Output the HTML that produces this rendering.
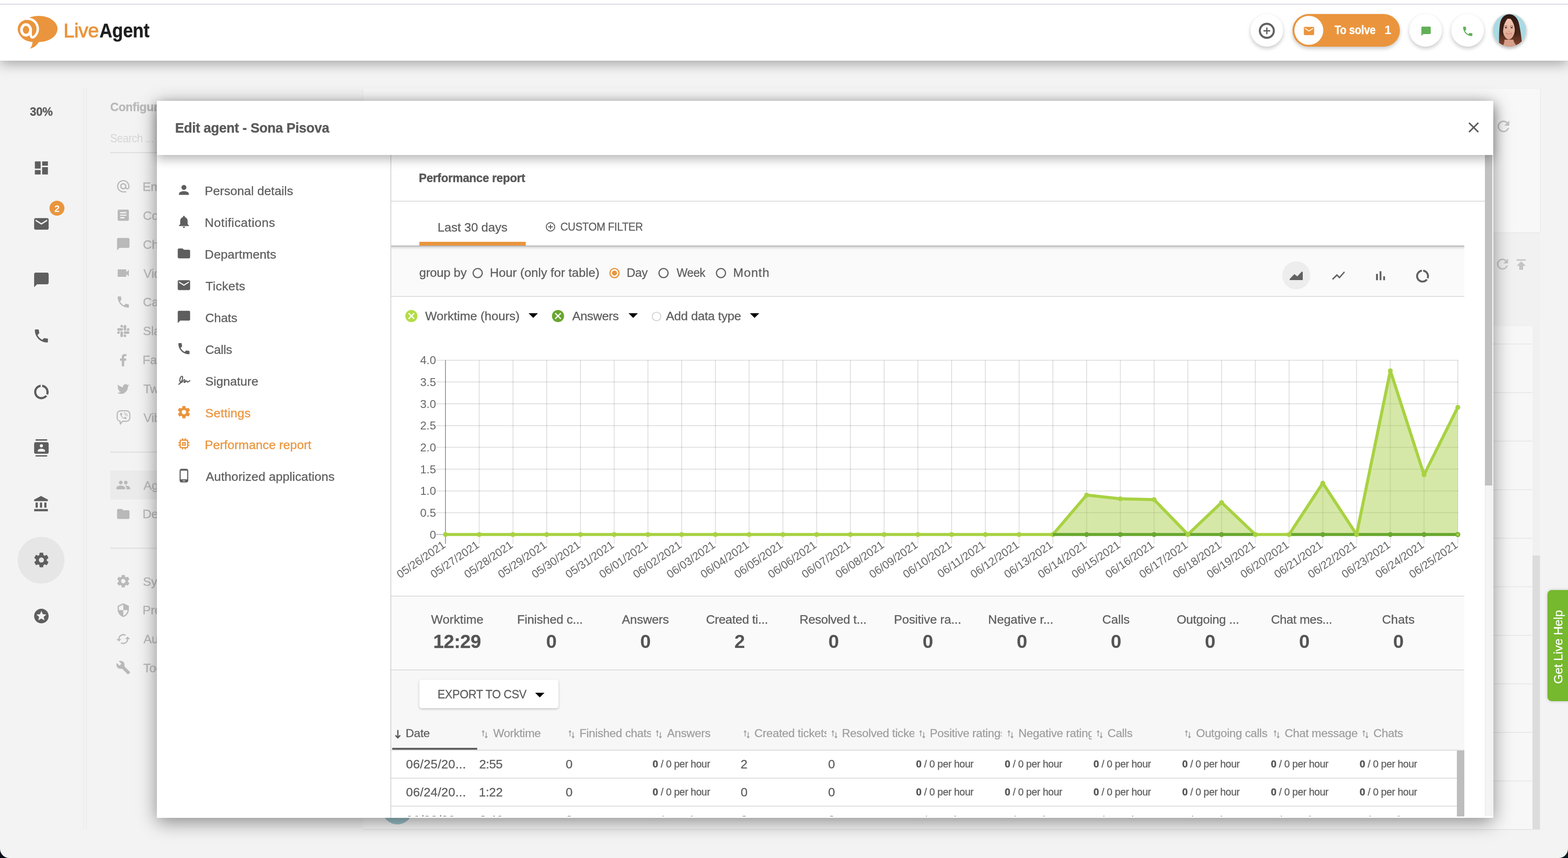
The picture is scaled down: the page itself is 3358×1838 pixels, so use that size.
<!DOCTYPE html>
<html lang="en"><head><meta charset="utf-8"><title>LiveAgent - Edit agent</title>
<style>
html,body{margin:0;padding:0}
body{width:3358px;height:1838px;position:relative;overflow:hidden;background:#f3f3f3;font-family:"Liberation Sans",Arial,sans-serif}
.t{position:absolute;white-space:nowrap;margin:0;padding:0}
#app{position:absolute;left:0;top:0;width:3358px;height:1838px;overflow:hidden;will-change:transform}
.b{position:absolute;display:block}
.c{position:absolute;overflow:hidden}
</style></head><body><div id="app">
<div class="b" style="left:778px;top:190px;width:2520px;height:308px;background:#f8f8f8;box-shadow:0 1px 3px rgba(0,0,0,.10)"></div>
<div class="b" style="left:778px;top:499px;width:2520px;height:200px;background:#f1f1f1"></div>
<div class="b" style="left:778px;top:699px;width:2504px;height:1078px;background:#f7f7f7"></div>
<div class="b" style="left:3282px;top:699px;width:16px;height:1078px;background:#f0f0f0"></div>
<div class="b" style="left:3282px;top:1190px;width:16px;height:587px;background:#dcdcdc"></div>
<div class="b" style="left:778px;top:1776px;width:2520px;height:2px;background:#e6e6e6"></div>
<div class="b" style="left:3198px;top:736px;width:84px;height:2px;background:#e9e9e9"></div>
<div class="b" style="left:3198px;top:840px;width:84px;height:2px;background:#e9e9e9"></div>
<div class="b" style="left:3198px;top:944px;width:84px;height:2px;background:#e9e9e9"></div>
<div class="b" style="left:3198px;top:1048px;width:84px;height:2px;background:#e9e9e9"></div>
<div class="b" style="left:3198px;top:1152px;width:84px;height:2px;background:#e9e9e9"></div>
<div class="b" style="left:3198px;top:1256.3px;width:84px;height:2px;background:#e9e9e9"></div>
<div class="b" style="left:3198px;top:1360px;width:84px;height:2px;background:#e9e9e9"></div>
<div class="b" style="left:3198px;top:1464.3px;width:84px;height:2px;background:#e9e9e9"></div>
<div class="b" style="left:3198px;top:1568px;width:84px;height:2px;background:#e9e9e9"></div>
<div class="b" style="left:3198px;top:1672.3px;width:84px;height:2px;background:#e9e9e9"></div>
<svg class="b" style="left:3200.9px;top:252.2px;" width="37.5" height="37.5" viewBox="0 0 24 24"><path fill="#c4c4c4" d="M17.65 6.35C16.2 4.9 14.21 4 12 4c-4.42 0-7.99 3.58-7.99 8s3.57 8 7.99 8c3.73 0 6.84-2.55 7.73-6h-2.08c-.82 2.33-3.04 4-5.65 4-3.31 0-6-2.69-6-6s2.69-6 6-6c1.66 0 3.14.69 4.22 1.78L13 11h7V4l-2.35 2.35z"/></svg>
<svg class="b" style="left:3200.1px;top:548.2px;" width="35.5" height="35.5" viewBox="0 0 24 24"><path fill="#c4c4c4" d="M17.65 6.35C16.2 4.9 14.21 4 12 4c-4.42 0-7.99 3.58-7.99 8s3.57 8 7.99 8c3.73 0 6.84-2.55 7.73-6h-2.08c-.82 2.33-3.04 4-5.65 4-3.31 0-6-2.69-6-6s2.69-6 6-6c1.66 0 3.14.69 4.22 1.78L13 11h7V4l-2.35 2.35z"/></svg>
<svg class="b" style="left:3240.6px;top:549.5px;" width="33.5" height="33.5" viewBox="0 0 24 24"><path fill="#c4c4c4" d="M5 4v2h14V4H5zm0 10h4v6h6v-6h4l-7-7-7 7z"/></svg>
<div class="b" style="left:818px;top:1700px;width:66px;height:66px;border-radius:50%;background:#9cc4cc"></div>
<div class="t" style="font-size:26.6px;line-height:26.6px;color:#b9b9b9;font-weight:700;-webkit-text-stroke:0.45px #b9b9b9;letter-spacing:-0.3px;left:235.8px;top:216.2px;transform:scaleX(0.9462);transform-origin:0 0;">Configuration</div>
<div class="t" style="font-size:25px;line-height:25px;color:#d8d8d8;-webkit-text-stroke:0.2px #d8d8d8;letter-spacing:-0.45px;left:235.5px;top:283.9px;transform:scaleX(0.9089);transform-origin:0 0;">Search ...</div>
<div class="b" style="left:236px;top:326px;width:200px;height:2px;background:#dedede"></div>
<div class="b" style="left:236px;top:1008px;width:200px;height:62px;background:#ebebeb"></div>
<svg class="b" style="left:247.5px;top:383.0px;" width="32" height="32" viewBox="0 0 24 24"><path fill="#b9b9b9" d="M12 2C6.48 2 2 6.48 2 12s4.48 10 10 10h5v-2h-5c-4.34 0-8-3.66-8-8s3.66-8 8-8 8 3.66 8 8v1.43c0 .79-.71 1.57-1.5 1.57s-1.5-.78-1.5-1.57V12c0-2.76-2.24-5-5-5s-5 2.24-5 5 2.24 5 5 5c1.38 0 2.64-.56 3.54-1.47.65.89 1.77 1.47 2.96 1.47 1.97 0 3.5-1.6 3.5-3.57V12c0-5.52-4.48-10-10-10zm0 13c-1.66 0-3-1.34-3-3s1.34-3 3-3 3 1.34 3 3-1.34 3-3 3z"/></svg>
<div class="t" style="font-size:26.6px;line-height:26.6px;color:#b9b9b9;-webkit-text-stroke:0.35px #b9b9b9;letter-spacing:-0.3px;left:305.2px;top:386.7px;">Email</div>
<svg class="b" style="left:247.5px;top:445.0px;" width="32" height="32" viewBox="0 0 24 24"><path fill="#b9b9b9" d="M19 3H5c-1.1 0-2 .9-2 2v14c0 1.1.9 2 2 2h14c1.1 0 2-.9 2-2V5c0-1.1-.9-2-2-2zm-5 14H7v-2h7v2zm3-4H7v-2h10v2zm0-4H7V7h10v2z"/></svg>
<div class="t" style="font-size:26.6px;line-height:26.6px;color:#b9b9b9;-webkit-text-stroke:0.35px #b9b9b9;letter-spacing:-0.3px;left:306.0px;top:448.7px;">Contact forms</div>
<svg class="b" style="left:247.5px;top:507.0px;" width="32" height="32" viewBox="0 0 24 24"><path fill="#b9b9b9" d="M20 2H4c-1.1 0-2 .9-2 2v18l4-4h14c1.1 0 2-.9 2-2V4c0-1.1-.9-2-2-2z"/></svg>
<div class="t" style="font-size:26.6px;line-height:26.6px;color:#b9b9b9;-webkit-text-stroke:0.35px #b9b9b9;letter-spacing:-0.3px;left:306.0px;top:510.7px;">Chat</div>
<svg class="b" style="left:247.5px;top:569.0px;" width="32" height="32" viewBox="0 0 24 24"><path fill="#b9b9b9" d="M17 10.5V7c0-.55-.45-1-1-1H4c-.55 0-1 .45-1 1v10c0 .55.45 1 1 1h12c.55 0 1-.45 1-1v-3.5l4 4v-11l-4 4z"/></svg>
<div class="t" style="font-size:26.6px;line-height:26.6px;color:#b9b9b9;-webkit-text-stroke:0.35px #b9b9b9;letter-spacing:-0.3px;left:307.2px;top:572.7px;">Video call</div>
<svg class="b" style="left:247.5px;top:630.5px;" width="32" height="32" viewBox="0 0 24 24"><path fill="#b9b9b9" d="M6.62 10.79c1.44 2.83 3.76 5.14 6.59 6.59l2.2-2.2c.27-.27.67-.36 1.02-.24 1.12.37 2.33.57 3.57.57.55 0 1 .45 1 1V20c0 .55-.45 1-1 1-9.39 0-17-7.61-17-17 0-.55.45-1 1-1h3.5c.55 0 1 .45 1 1 0 1.25.2 2.45.57 3.57.11.35.03.74-.25 1.02l-2.2 2.2z"/></svg>
<div class="t" style="font-size:26.6px;line-height:26.6px;color:#b9b9b9;-webkit-text-stroke:0.35px #b9b9b9;letter-spacing:-0.3px;left:306.0px;top:634.2px;">Call</div>
<svg class="b" style="left:250.5px;top:695.7px;" width="26.2" height="26.2" viewBox="0 0 24 24"><path fill="#b9b9b9" d="M5.042 15.165a2.528 2.528 0 0 1-2.52 2.523A2.528 2.528 0 0 1 0 15.165a2.527 2.527 0 0 1 2.522-2.52h2.52v2.52zM6.313 15.165a2.527 2.527 0 0 1 2.521-2.52 2.527 2.527 0 0 1 2.521 2.52v6.313A2.528 2.528 0 0 1 8.834 24a2.528 2.528 0 0 1-2.521-2.522v-6.313zM8.834 5.042a2.528 2.528 0 0 1-2.521-2.52A2.528 2.528 0 0 1 8.834 0a2.528 2.528 0 0 1 2.521 2.522v2.52H8.834zM8.834 6.313a2.528 2.528 0 0 1 2.521 2.521 2.528 2.528 0 0 1-2.521 2.521H2.522A2.528 2.528 0 0 1 0 8.834a2.528 2.528 0 0 1 2.522-2.521h6.312zM18.956 8.834a2.528 2.528 0 0 1 2.522-2.521A2.528 2.528 0 0 1 24 8.834a2.528 2.528 0 0 1-2.522 2.521h-2.522V8.834zM17.688 8.834a2.528 2.528 0 0 1-2.523 2.521 2.527 2.527 0 0 1-2.52-2.521V2.522A2.527 2.527 0 0 1 15.165 0a2.528 2.528 0 0 1 2.523 2.522v6.312zM15.165 18.956a2.528 2.528 0 0 1 2.523 2.522A2.528 2.528 0 0 1 15.165 24a2.527 2.527 0 0 1-2.52-2.522v-2.522h2.52zM15.165 17.688a2.527 2.527 0 0 1-2.52-2.523 2.526 2.526 0 0 1 2.52-2.52h6.313A2.527 2.527 0 0 1 24 15.165a2.528 2.528 0 0 1-2.522 2.523h-6.313z"/></svg>
<div class="t" style="font-size:26.6px;line-height:26.6px;color:#b9b9b9;-webkit-text-stroke:0.35px #b9b9b9;letter-spacing:-0.3px;left:306.1px;top:696.2px;">Slack</div>
<svg class="b" style="left:246.6px;top:753.8px;" width="33.5" height="33.5" viewBox="0 0 24 24"><path fill="#b9b9b9" d="M13.5 22v-8.5h2.9l.45-3.4H13.5V8c0-1 .3-1.65 1.7-1.65h1.8V3.3C16.7 3.25 15.6 3.15 14.4 3.15c-2.6 0-4.4 1.6-4.4 4.5v2.45H7.1v3.4H10V22z"/></svg>
<div class="t" style="font-size:26.6px;line-height:26.6px;color:#b9b9b9;-webkit-text-stroke:0.35px #b9b9b9;letter-spacing:-0.3px;left:305.2px;top:758.2px;">Facebook</div>
<svg class="b" style="left:249.1px;top:817.8px;" width="29.5" height="29.5" viewBox="0 0 24 24"><path fill="#b9b9b9" d="M22.46 6c-.77.35-1.6.58-2.46.69.88-.53 1.56-1.37 1.88-2.38-.83.5-1.75.85-2.72 1.05C18.37 4.5 17.26 4 16 4c-2.35 0-4.27 1.92-4.27 4.29 0 .34.04.67.11.98C8.28 9.09 5.11 7.38 3 4.79c-.37.63-.58 1.37-.58 2.15 0 1.49.75 2.81 1.91 3.56-.71 0-1.37-.2-1.95-.5v.03c0 2.08 1.48 3.82 3.44 4.21a4.22 4.22 0 0 1-1.93.07 4.28 4.28 0 0 0 4 2.98 8.521 8.521 0 0 1-5.33 1.84c-.34 0-.68-.02-1.02-.06C3.44 20.29 5.7 21 8.12 21 16 21 20.33 14.46 20.33 8.79c0-.19 0-.37-.01-.56.84-.6 1.56-1.36 2.14-2.23z"/></svg>
<div class="t" style="font-size:26.6px;line-height:26.6px;color:#b9b9b9;-webkit-text-stroke:0.35px #b9b9b9;letter-spacing:-0.3px;left:306.8px;top:819.7px;">Twitter</div>
<svg class="b" style="left:249px;top:878px" width="31" height="33" viewBox="0 0 31 33"><path d="M9 2 H22 A7 7 0 0 1 29 9 V17.5 A7 7 0 0 1 22 24.5 H13.5 L8.6 30.5 L8.2 24.3 A7 7 0 0 1 2 17.5 V9 A7 7 0 0 1 9 2 Z" fill="none" stroke="#b9b9b9" stroke-width="2.4" stroke-linejoin="round"/><g transform="translate(6.2,4.2) scale(0.74)"><path fill="#b9b9b9" d="M6.62 10.79c1.44 2.83 3.76 5.14 6.59 6.59l2.2-2.2c.27-.27.67-.36 1.02-.24 1.12.37 2.33.57 3.57.57.55 0 1 .45 1 1V20c0 .55-.45 1-1 1-9.39 0-17-7.61-17-17 0-.55.45-1 1-1h3.5c.55 0 1 .45 1 1 0 1.25.2 2.45.57 3.57.11.35.03.74-.25 1.02l-2.2 2.2z"/></g><path d="M17 6.2 A7.4 7.4 0 0 1 24 13 M17 9.2 A4.4 4.4 0 0 1 21 13" fill="none" stroke="#b9b9b9" stroke-width="1.3" stroke-linecap="round"/></svg>
<div class="t" style="font-size:26.6px;line-height:26.6px;color:#b9b9b9;-webkit-text-stroke:0.35px #b9b9b9;letter-spacing:-0.3px;left:307.2px;top:881.7px;">Viber</div>
<div class="b" style="left:236px;top:967px;width:200px;height:3px;background:#e4e4e4"></div>
<svg class="b" style="left:247.5px;top:1023.0px;" width="32" height="32" viewBox="0 0 24 24"><path fill="#b9b9b9" d="M16 11c1.66 0 2.99-1.34 2.99-3S17.66 5 16 5c-1.66 0-3 1.34-3 3s1.34 3 3 3zm-8 0c1.66 0 2.99-1.34 2.99-3S9.66 5 8 5C6.34 5 5 6.34 5 8s1.34 3 3 3zm0 2c-2.33 0-7 1.17-7 3.5V19h14v-2.5c0-2.33-4.67-3.5-7-3.5zm8 0c-.29 0-.62.02-.97.05 1.16.84 1.97 1.97 1.97 3.45V19h6v-2.5c0-2.33-4.67-3.5-7-3.5z"/></svg>
<div class="t" style="font-size:26.6px;line-height:26.6px;color:#b9b9b9;-webkit-text-stroke:0.35px #b9b9b9;letter-spacing:-0.3px;left:307.3px;top:1026.7px;">Agents</div>
<svg class="b" style="left:247.5px;top:1084.5px;" width="32" height="32" viewBox="0 0 24 24"><path fill="#b9b9b9" d="M10 4H4c-1.1 0-1.99.9-1.99 2L2 18c0 1.1.9 2 2 2h16c1.1 0 2-.9 2-2V8c0-1.1-.9-2-2-2h-8l-2-2z"/></svg>
<div class="t" style="font-size:26.6px;line-height:26.6px;color:#b9b9b9;-webkit-text-stroke:0.35px #b9b9b9;letter-spacing:-0.3px;left:305.2px;top:1088.2px;">Departments</div>
<div class="b" style="left:236px;top:1173px;width:200px;height:3px;background:#e4e4e4"></div>
<svg class="b" style="left:247.5px;top:1229.0px;" width="32" height="32" viewBox="0 0 24 24"><path fill="#b9b9b9" d="M19.43 12.98c.04-.32.07-.64.07-.98s-.03-.66-.07-.98l2.11-1.65c.19-.15.24-.42.12-.64l-2-3.46c-.12-.22-.39-.3-.61-.22l-2.49 1c-.52-.4-1.08-.73-1.69-.98l-.38-2.65C14.46 2.18 14.25 2 14 2h-4c-.25 0-.46.18-.49.42l-.38 2.65c-.61.25-1.17.59-1.69.98l-2.49-1c-.23-.09-.49 0-.61.22l-2 3.46c-.13.22-.07.49.12.64l2.11 1.65c-.04.32-.07.65-.07.98s.03.66.07.98l-2.11 1.65c-.19.15-.24.42-.12.64l2 3.46c.12.22.39.3.61.22l2.49-1c.52.4 1.08.73 1.69.98l.38 2.65c.03.24.24.42.49.42h4c.25 0 .46-.18.49-.42l.38-2.65c.61-.25 1.17-.59 1.69-.98l2.49 1c.23.09.49 0 .61-.22l2-3.46c.12-.22.07-.49-.12-.64l-2.11-1.65zM12 15.5c-1.93 0-3.5-1.57-3.5-3.5s1.57-3.5 3.5-3.5 3.5 1.57 3.5 3.5-1.57 3.5-3.5 3.5z"/></svg>
<div class="t" style="font-size:26.6px;line-height:26.6px;color:#b9b9b9;-webkit-text-stroke:0.35px #b9b9b9;letter-spacing:-0.3px;left:306.1px;top:1232.7px;">System</div>
<svg class="b" style="left:247.5px;top:1290.5px;" width="32" height="32" viewBox="0 0 24 24"><path fill="#b9b9b9" d="M12 1L3 5v6c0 5.55 3.84 10.74 9 12 5.16-1.26 9-6.45 9-12V5l-9-4zm0 10.99h7c-.53 4.12-3.28 7.79-7 8.94V12H5V6.3l7-3.11v8.8z"/></svg>
<div class="t" style="font-size:26.6px;line-height:26.6px;color:#b9b9b9;-webkit-text-stroke:0.35px #b9b9b9;letter-spacing:-0.3px;left:305.2px;top:1294.2px;">Protection</div>
<svg class="b" style="left:247.5px;top:1352.5px;" width="32" height="32" viewBox="0 0 24 24"><path fill="#b9b9b9" d="M19 8l-4 4h3c0 3.31-2.69 6-6 6-1.01 0-1.97-.25-2.8-.7l-1.46 1.46C8.97 19.54 10.43 20 12 20c4.42 0 8-3.58 8-8h3l-4-4zM6 12c0-3.31 2.69-6 6-6 1.01 0 1.97.25 2.8.7l1.46-1.46C15.03 4.46 13.57 4 12 4c-4.42 0-8 3.58-8 8H1l4 4 4-4H6z"/></svg>
<div class="t" style="font-size:26.6px;line-height:26.6px;color:#b9b9b9;-webkit-text-stroke:0.35px #b9b9b9;letter-spacing:-0.3px;left:307.3px;top:1356.2px;">Automation</div>
<svg class="b" style="left:247.5px;top:1414.0px;" width="32" height="32" viewBox="0 0 24 24"><path fill="#b9b9b9" d="M22.7 19l-9.1-9.1c.9-2.3.4-5-1.5-6.9-2-2-5-2.4-7.4-1.3L9 6 6 9 1.6 4.7C.4 7.1.9 10.1 2.9 12.1c1.9 1.9 4.6 2.4 6.9 1.5l9.1 9.1c.4.4 1 .4 1.4 0l2.3-2.3c.5-.4.5-1.1.1-1.4z"/></svg>
<div class="t" style="font-size:26.6px;line-height:26.6px;color:#b9b9b9;-webkit-text-stroke:0.35px #b9b9b9;letter-spacing:-0.3px;left:306.8px;top:1417.7px;">Tools</div>
<div class="b" style="left:178px;top:190px;width:2px;height:1586px;background:#ececec"></div>
<div class="b" style="left:184px;top:190px;width:2px;height:1586px;background:#ececec"></div>
<div class="t" style="font-size:26.6px;line-height:26.6px;color:#5c5c5c;font-weight:700;-webkit-text-stroke:0.45px #5c5c5c;letter-spacing:-0.3px;left:63.6px;top:226.2px;transform:scaleX(0.9299);transform-origin:0 0;">30%</div>
<div class="b" style="left:38px;top:1150px;width:100px;height:100px;border-radius:50%;background:#e6e6e6"></div>
<svg class="b" style="left:69.7px;top:341.2px;" width="37.3" height="37.3" viewBox="0 0 24 24"><path fill="#5e5e5e" d="M3 13h8V3H3v10zm0 8h8v-6H3v6zm10 0h8V11h-8v10zm0-18v6h8V3h-8z"/></svg>
<svg class="b" style="left:69.7px;top:461.2px;" width="37.3" height="37.3" viewBox="0 0 24 24"><path fill="#5e5e5e" d="M20 4H4c-1.1 0-1.99.9-1.99 2L2 18c0 1.1.9 2 2 2h16c1.1 0 2-.9 2-2V6c0-1.1-.9-2-2-2zm0 4l-8 5-8-5V6l8 5 8-5v2z"/></svg>
<svg class="b" style="left:69.7px;top:581.1px;" width="37.3" height="37.3" viewBox="0 0 24 24"><path fill="#5e5e5e" d="M20 2H4c-1.1 0-2 .9-2 2v18l4-4h14c1.1 0 2-.9 2-2V4c0-1.1-.9-2-2-2z"/></svg>
<svg class="b" style="left:69.7px;top:701.1px;" width="37.3" height="37.3" viewBox="0 0 24 24"><path fill="#5e5e5e" d="M6.62 10.79c1.44 2.83 3.76 5.14 6.59 6.59l2.2-2.2c.27-.27.67-.36 1.02-.24 1.12.37 2.33.57 3.57.57.55 0 1 .45 1 1V20c0 .55-.45 1-1 1-9.39 0-17-7.61-17-17 0-.55.45-1 1-1h3.5c.55 0 1 .45 1 1 0 1.25.2 2.45.57 3.57.11.35.03.74-.25 1.02l-2.2 2.2z"/></svg>
<svg class="b" style="left:69.7px;top:821.1px;" width="37.3" height="37.3" viewBox="0 0 24 24"><path fill="#5e5e5e" d="M13 2.05v3.03c3.39.49 6 3.39 6 6.92 0 .9-.18 1.75-.48 2.54l2.6 1.53c.56-1.24.88-2.62.88-4.07 0-5.18-3.95-9.45-9-9.95zM12 19c-3.87 0-7-3.13-7-7 0-3.53 2.61-6.43 6-6.92V2.05c-5.06.5-9 4.76-9 9.95 0 5.52 4.47 10 9.99 10 3.31 0 6.24-1.61 8.06-4.09l-2.6-1.53C16.17 17.98 14.21 19 12 19z"/></svg>
<svg class="b" style="left:69.7px;top:941.1px;" width="37.3" height="37.3" viewBox="0 0 24 24"><path fill="#5e5e5e" d="M20 0H4v2h16V0zM4 24h16v-2H4v2zM20 4H4c-1.1 0-2 .9-2 2v12c0 1.1.9 2 2 2h16c1.1 0 2-.9 2-2V6c0-1.1-.9-2-2-2zm-8 2.75c1.24 0 2.25 1.01 2.25 2.25s-1.01 2.25-2.25 2.25S9.75 10.24 9.75 9 10.76 6.75 12 6.75zM17 17H7v-1.5c0-1.67 3.33-2.5 5-2.5s5 .83 5 2.5V17z"/></svg>
<svg class="b" style="left:69.7px;top:1061.1px;" width="37.3" height="37.3" viewBox="0 0 24 24"><path fill="#5e5e5e" d="M4 10v7h3v-7H4zm6 0v7h3v-7h-3zM2 22h19v-3H2v3zm14-12v7h3v-7h-3zm-4.5-9L2 6v2h19V6l-9.5-5z"/></svg>
<svg class="b" style="left:69.7px;top:1181.1px;" width="37.3" height="37.3" viewBox="0 0 24 24"><path fill="#5e5e5e" d="M19.43 12.98c.04-.32.07-.64.07-.98s-.03-.66-.07-.98l2.11-1.65c.19-.15.24-.42.12-.64l-2-3.46c-.12-.22-.39-.3-.61-.22l-2.49 1c-.52-.4-1.08-.73-1.69-.98l-.38-2.65C14.46 2.18 14.25 2 14 2h-4c-.25 0-.46.18-.49.42l-.38 2.65c-.61.25-1.17.59-1.69.98l-2.49-1c-.23-.09-.49 0-.61.22l-2 3.46c-.13.22-.07.49.12.64l2.11 1.65c-.04.32-.07.65-.07.98s.03.66.07.98l-2.11 1.65c-.19.15-.24.42-.12.64l2 3.46c.12.22.39.3.61.22l2.49-1c.52.4 1.08.73 1.69.98l.38 2.65c.03.24.24.42.49.42h4c.25 0 .46-.18.49-.42l.38-2.65c.61-.25 1.17-.59 1.69-.98l2.49 1c.23.09.49 0 .61-.22l2-3.46c.12-.22.07-.49-.12-.64l-2.11-1.65zM12 15.5c-1.93 0-3.5-1.57-3.5-3.5s1.57-3.5 3.5-3.5 3.5 1.57 3.5 3.5-1.57 3.5-3.5 3.5z"/></svg>
<svg class="b" style="left:69.7px;top:1301.1px;" width="37.3" height="37.3" viewBox="0 0 24 24"><path fill="#5e5e5e" d="M11.99 2C6.47 2 2 6.48 2 12s4.47 10 9.99 10C17.52 22 22 17.52 22 12S17.52 2 11.99 2zm4.24 16L12 15.45 7.77 18l1.12-4.81-3.73-3.23 4.92-.42L12 5l1.92 4.53 4.92.42-3.73 3.23L16.23 18z"/></svg>
<div class="b" style="left:106px;top:430px;width:32px;height:32px;border-radius:50%;background:#ea953d"></div>
<div class="t" style="font-size:20px;line-height:20px;color:#fff;font-weight:700;left:116.5px;top:437.3px;">2</div>
<div class="b" style="left:0px;top:0px;width:3358px;height:130px;background:#fff;box-shadow:0 6px 26px rgba(0,0,0,.34)"></div>
<div class="b" style="left:0px;top:8px;width:3358px;height:2px;background:#d9d9e2"></div>
<svg class="b" style="left:30px;top:28px" width="100" height="84" viewBox="30 28 100 84" role="img" aria-label="LiveAgent logo mark"><title>@ LiveAgent</title>
<g fill="#ea953d"><ellipse cx="83" cy="62" rx="40.2" ry="28.1"/><circle cx="57.3" cy="62.2" r="19.4"/><ellipse cx="72" cy="64" rx="33" ry="26"/><path d="M69.5 87 Q70.5 96.5 64.3 104.2 Q75.5 102 83.5 90 Z"/></g>
<g fill="none" stroke="#fff"><ellipse cx="55.7" cy="64.1" rx="9.7" ry="11.4" stroke-width="5.8"/><path d="M54.6 40.5 A21.9 21.9 0 0 1 72.4 79.3 Q66.3 82.5 65.6 73 L65.6 60" stroke-width="5.2" stroke-linejoin="round"/></g></svg>
<div class="t" style="font-size:42.5px;line-height:42.5px;color:#ea953d;-webkit-text-stroke:1.1px #ea953d;letter-spacing:-0.45px;left:135.6px;top:45.1px;transform:scaleX(0.9912);transform-origin:0 0;">Live</div>
<div class="t" style="font-size:42.5px;line-height:42.5px;color:#1e1e1e;font-weight:700;-webkit-text-stroke:0.45px #1e1e1e;letter-spacing:-0.3px;left:213.0px;top:45.1px;transform:scaleX(0.8989);transform-origin:0 0;">Agent</div>
<div class="b" style="left:2678.0px;top:30.400000000000006px;width:70px;height:70px;border-radius:50%;background:#fff;box-shadow:0 4px 9px rgba(0,0,0,.22);"></div>
<svg class="b" style="left:2693px;top:45.6px" width="40" height="40" viewBox="0 0 40 40"><circle cx="20" cy="20" r="15" fill="none" stroke="#616161" stroke-width="4.3"/><path d="M12.8 20 H27.2 M20 12.8 V27.2" stroke="#616161" stroke-width="2.9" fill="none"/></svg>
<div class="b" style="left:2768px;top:30px;width:230px;height:70px;border-radius:35px;background:#ea953d;box-shadow:0 4px 9px rgba(0,0,0,.22);"></div>
<div class="b" style="left:2772.0px;top:34.0px;width:62px;height:62px;border-radius:50%;background:#fff;"></div>
<svg class="b" style="left:2789.7px;top:53.4px;" width="26.6" height="26.6" viewBox="0 0 24 24"><path fill="#ea953d" d="M20 4H4c-1.1 0-1.99.9-1.99 2L2 18c0 1.1.9 2 2 2h16c1.1 0 2-.9 2-2V6c0-1.1-.9-2-2-2zm0 4l-8 5-8-5V6l8 5 8-5v2z"/></svg>
<div class="t" style="font-size:26.6px;line-height:26.6px;color:#fff;font-weight:700;-webkit-text-stroke:0.45px #fff;letter-spacing:-0.3px;left:2858.1px;top:50.7px;transform:scaleX(0.8471);transform-origin:0 0;">To solve</div>
<div class="t" style="font-size:26.6px;line-height:26.6px;color:#fff;font-weight:700;left:2965.0px;top:50.7px;">1</div>
<div class="b" style="left:3018.0px;top:30.400000000000006px;width:70px;height:70px;border-radius:50%;background:#fff;box-shadow:0 4px 9px rgba(0,0,0,.22);"></div>
<svg class="b" style="left:3041.5px;top:54.6px;" width="24" height="24" viewBox="0 0 24 24"><path fill="#62b058" d="M20 2H4c-1.1 0-2 .9-2 2v18l4-4h14c1.1 0 2-.9 2-2V4c0-1.1-.9-2-2-2z"/></svg>
<div class="b" style="left:3108.0px;top:30.400000000000006px;width:70px;height:70px;border-radius:50%;background:#fff;box-shadow:0 4px 9px rgba(0,0,0,.22);"></div>
<svg class="b" style="left:3130.3px;top:53.5px;" width="26.5" height="26.5" viewBox="0 0 24 24"><path fill="#62b058" d="M6.62 10.79c1.44 2.83 3.76 5.14 6.59 6.59l2.2-2.2c.27-.27.67-.36 1.02-.24 1.12.37 2.33.57 3.57.57.55 0 1 .45 1 1V20c0 .55-.45 1-1 1-9.39 0-17-7.61-17-17 0-.55.45-1 1-1h3.5c.55 0 1 .45 1 1 0 1.25.2 2.45.57 3.57.11.35.03.74-.25 1.02l-2.2 2.2z"/></svg>
<svg class="b" style="left:3196.8px;top:29.3px;filter:drop-shadow(0 3px 3px rgba(0,0,0,.28))" width="72" height="72" viewBox="0 0 72 72" role="img" aria-label="Agent avatar">
<defs><clipPath id="av"><circle cx="36" cy="36" r="35"/></clipPath>
<linearGradient id="hr" x1="0" y1="0" x2="0" y2="1"><stop offset="0" stop-color="#2b1712"/><stop offset=".55" stop-color="#4a2519"/><stop offset="1" stop-color="#8a4a36"/></linearGradient>
<linearGradient id="sk" x1="0" y1="0" x2="0" y2="1"><stop offset="0" stop-color="#f0c6b2"/><stop offset="1" stop-color="#dfa590"/></linearGradient></defs>
<circle cx="36" cy="36" r="36" fill="#d9d9d9"/>
<g clip-path="url(#av)">
<rect width="72" height="72" fill="#a9dae3"/>
<path d="M35 1.5 C25 2 17.5 9 15.5 21 C13.5 33 13 52 13.5 74 L63 74 C62.5 60 60 40 56.5 24 C54 10 46 1.5 35 1.5 Z" fill="url(#hr)"/>
<path d="M25 56 L44 56 C45 63 50 68 56 74 L18 74 C23 68 25 63 25 56 Z" fill="#d79f8a"/>
<path d="M21 30 C21 17 27 11 34 11 C41.5 11 47.5 17 47.5 30 C47.5 44 41.5 55.5 34.2 55.5 C27 55.5 21 44 21 30 Z" fill="url(#sk)"/>
<path d="M34.5 7 C27 8 21.5 15 19.5 26 C18.5 33 19 43 20.5 50 C21.5 42 22 34 23.5 27 C25.5 19 30 12 34.5 7 Z" fill="#371d15"/>
<path d="M34.5 7 C41 9 47 15 49 26 C50.2 33 50.3 43 49 50 C48 42 47.5 34 46 27 C44 19 39.5 12 34.5 7 Z" fill="#371d15"/>
<ellipse cx="28" cy="30.2" rx="2.5" ry="1.3" fill="#3b2a28"/><ellipse cx="40.3" cy="30.2" rx="2.5" ry="1.3" fill="#3b2a28"/>
<path d="M24.8 27.3 Q28 25.6 31 27.2 M37.3 27.2 Q40.3 25.6 43.6 27.3" stroke="#5a3a30" stroke-width="0.9" fill="none"/>
<path d="M32.3 37.8 Q34.2 39.2 36.2 37.8" stroke="#c98d78" stroke-width="1" fill="none"/>
<path d="M28.2 42 Q34.2 48.8 40.4 42 Q34.2 44.2 28.2 42 Z" fill="#fff" stroke="#c66f68" stroke-width="1.1" stroke-linejoin="round"/>
</g></svg>
<div class="c" style="left:336px;top:216px;width:2862px;height:1536px;background:#fff;overflow:visible;box-shadow:0 9px 38px rgba(0,0,0,.44)"></div>
<svg class="b" style="left:378.1px;top:390.8px;" width="31.8" height="31.8" viewBox="0 0 24 24"><path fill="#5e5e5e" d="M12 12c2.21 0 4-1.79 4-4s-1.79-4-4-4-4 1.79-4 4 1.79 4 4 4zm0 2c-2.67 0-8 1.34-8 4v2h16v-2c0-2.66-5.33-4-8-4z"/></svg>
<div class="t" style="font-size:26.6px;line-height:26.6px;color:#5f5f5f;-webkit-text-stroke:0.35px #5f5f5f;left:438.6px;top:396.2px;">Personal details</div>
<svg class="b" style="left:378.1px;top:458.8px;" width="31.8" height="31.8" viewBox="0 0 24 24"><path fill="#5e5e5e" d="M12 22c1.1 0 2-.9 2-2h-4c0 1.1.89 2 2 2zm6-6v-5c0-3.07-1.64-5.64-4.5-6.32V4c0-.83-.67-1.5-1.5-1.5s-1.5.67-1.5 1.5v.68C7.63 5.36 6 7.92 6 11v5l-2 2v1h16v-1l-2-2z"/></svg>
<div class="t" style="font-size:26.6px;line-height:26.6px;color:#5f5f5f;-webkit-text-stroke:0.35px #5f5f5f;letter-spacing:0.47px;left:438.6px;top:464.2px;">Notifications</div>
<svg class="b" style="left:378.1px;top:526.8px;" width="31.8" height="31.8" viewBox="0 0 24 24"><path fill="#5e5e5e" d="M10 4H4c-1.1 0-1.99.9-1.99 2L2 18c0 1.1.9 2 2 2h16c1.1 0 2-.9 2-2V8c0-1.1-.9-2-2-2h-8l-2-2z"/></svg>
<div class="t" style="font-size:26.6px;line-height:26.6px;color:#5f5f5f;-webkit-text-stroke:0.35px #5f5f5f;letter-spacing:0.08px;left:438.6px;top:532.2px;">Departments</div>
<svg class="b" style="left:378.1px;top:594.8px;" width="31.8" height="31.8" viewBox="0 0 24 24"><path fill="#5e5e5e" d="M20 4H4c-1.1 0-1.99.9-1.99 2L2 18c0 1.1.9 2 2 2h16c1.1 0 2-.9 2-2V6c0-1.1-.9-2-2-2zm0 4l-8 5-8-5V6l8 5 8-5v2z"/></svg>
<div class="t" style="font-size:26.6px;line-height:26.6px;color:#5f5f5f;-webkit-text-stroke:0.35px #5f5f5f;letter-spacing:0.28px;left:440.2px;top:600.2px;">Tickets</div>
<svg class="b" style="left:378.1px;top:662.8px;" width="31.8" height="31.8" viewBox="0 0 24 24"><path fill="#5e5e5e" d="M20 2H4c-1.1 0-2 .9-2 2v18l4-4h14c1.1 0 2-.9 2-2V4c0-1.1-.9-2-2-2z"/></svg>
<div class="t" style="font-size:26.6px;line-height:26.6px;color:#5f5f5f;-webkit-text-stroke:0.35px #5f5f5f;letter-spacing:-0.12px;left:439.4px;top:668.2px;">Chats</div>
<svg class="b" style="left:378.1px;top:730.8px;" width="31.8" height="31.8" viewBox="0 0 24 24"><path fill="#5e5e5e" d="M6.62 10.79c1.44 2.83 3.76 5.14 6.59 6.59l2.2-2.2c.27-.27.67-.36 1.02-.24 1.12.37 2.33.57 3.57.57.55 0 1 .45 1 1V20c0 .55-.45 1-1 1-9.39 0-17-7.61-17-17 0-.55.45-1 1-1h3.5c.55 0 1 .45 1 1 0 1.25.2 2.45.57 3.57.11.35.03.74-.25 1.02l-2.2 2.2z"/></svg>
<div class="t" style="font-size:26.6px;line-height:26.6px;color:#5f5f5f;-webkit-text-stroke:0.35px #5f5f5f;letter-spacing:-0.28px;left:439.4px;top:736.2px;">Calls</div>
<svg class="b" style="left:377.5px;top:797.9px" width="33" height="33" viewBox="0 0 33 33"><path d="M5 25.2 C9.5 22.8 13.6 15 13.2 10.2 C12.8 6.2 8.6 8 7.4 14.2 C6.2 20.8 9.4 23.4 12.6 19.8 C14 18.2 15 15.6 16.8 15.4 C18.8 15.2 18.6 18 17 19.2 C15.4 20.4 16.2 21.8 18 21 C19.6 20.3 20.4 17.6 21.8 17.8 C23 18 22.2 20.3 23.6 20.5 C25 20.7 26.4 18.6 28.6 17.4" fill="none" stroke="#5e5e5e" stroke-width="2.3" stroke-linecap="round" stroke-linejoin="round"/></svg>
<div class="t" style="font-size:26.6px;line-height:26.6px;color:#5f5f5f;-webkit-text-stroke:0.35px #5f5f5f;letter-spacing:-0.03px;left:439.6px;top:804.2px;">Signature</div>
<svg class="b" style="left:378.1px;top:866.8px;" width="31.8" height="31.8" viewBox="0 0 24 24"><path fill="#ea953d" d="M19.43 12.98c.04-.32.07-.64.07-.98s-.03-.66-.07-.98l2.11-1.65c.19-.15.24-.42.12-.64l-2-3.46c-.12-.22-.39-.3-.61-.22l-2.49 1c-.52-.4-1.08-.73-1.69-.98l-.38-2.65C14.46 2.18 14.25 2 14 2h-4c-.25 0-.46.18-.49.42l-.38 2.65c-.61.25-1.17.59-1.69.98l-2.49-1c-.23-.09-.49 0-.61.22l-2 3.46c-.13.22-.07.49.12.64l2.11 1.65c-.04.32-.07.65-.07.98s.03.66.07.98l-2.11 1.65c-.19.15-.24.42-.12.64l2 3.46c.12.22.39.3.61.22l2.49-1c.52.4 1.08.73 1.69.98l.38 2.65c.03.24.24.42.49.42h4c.25 0 .46-.18.49-.42l.38-2.65c.61-.25 1.17-.59 1.69-.98l2.49 1c.23.09.49 0 .61-.22l2-3.46c.12-.22.07-.49-.12-.64l-2.11-1.65zM12 15.5c-1.93 0-3.5-1.57-3.5-3.5s1.57-3.5 3.5-3.5 3.5 1.57 3.5 3.5-1.57 3.5-3.5 3.5z"/></svg>
<div class="t" style="font-size:26.6px;line-height:26.6px;color:#ea953d;-webkit-text-stroke:0.35px #ea953d;letter-spacing:0.15px;left:439.6px;top:872.2px;">Settings</div>
<svg class="b" style="left:378.1px;top:934.8px;" width="31.8" height="31.8" viewBox="0 0 24 24"><path fill="#ea953d" d="M15 9H9v6h6V9zm-2 4h-2v-2h2v2zm8-2V9h-2V7c0-1.1-.9-2-2-2h-2V3h-2v2h-2V3H9v2H7c-1.1 0-2 .9-2 2v2H3v2h2v2H3v2h2v2c0 1.1.9 2 2 2h2v2h2v-2h2v2h2v-2h2c1.1 0 2-.9 2-2v-2h2v-2h-2v-2h2zm-4 6H7V7h10v10z"/></svg>
<div class="t" style="font-size:26.6px;line-height:26.6px;color:#ea953d;-webkit-text-stroke:0.35px #ea953d;letter-spacing:-0.04px;left:438.6px;top:940.2px;">Performance report</div>
<svg class="b" style="left:378.1px;top:1002.8px;" width="31.8" height="31.8" viewBox="0 0 24 24"><path fill="#5e5e5e" d="M16 1H8C6.34 1 5 2.34 5 4v16c0 1.66 1.34 3 3 3h8c1.66 0 3-1.34 3-3V4c0-1.66-1.34-3-3-3zm-2 20h-4v-1h4v1zm3.25-3H6.75V4h10.5v14z"/></svg>
<div class="t" style="font-size:26.6px;line-height:26.6px;color:#5f5f5f;-webkit-text-stroke:0.35px #5f5f5f;letter-spacing:0.03px;left:440.8px;top:1008.2px;">Authorized applications</div>
<div class="b" style="left:836px;top:332px;width:2px;height:1420px;background:#d6d6d6"></div>
<div class="t" style="font-size:26.6px;line-height:26.6px;color:#575757;font-weight:700;-webkit-text-stroke:0.45px #575757;letter-spacing:-0.3px;left:896.7px;top:367.8px;transform:scaleX(0.9426);transform-origin:0 0;">Performance report</div>
<div class="b" style="left:838px;top:430px;width:2342px;height:2px;background:#dedede"></div>
<div class="b" style="left:838px;top:526px;width:2298px;height:109px;background:#fafafa"></div>
<div class="b" style="left:838px;top:634px;width:2298px;height:2px;background:#dedede"></div>
<div class="b" style="left:838px;top:432px;width:2298px;height:94px;background:#fff"></div>
<div class="b" style="left:838px;top:526px;width:2298px;height:10px;background:linear-gradient(to bottom, rgba(0,0,0,.34), rgba(0,0,0,.13) 28%, rgba(0,0,0,.04) 65%, rgba(0,0,0,0))"></div>
<div class="t" style="font-size:26.6px;line-height:26.6px;color:#5f5f5f;-webkit-text-stroke:0.35px #5f5f5f;letter-spacing:-0.11px;left:937.1px;top:473.7px;">Last 30 days</div>
<div class="b" style="left:898px;top:518px;width:228px;height:8px;background:#ea953d"></div>
<svg class="b" style="left:1166.8px;top:473.8px;" width="24" height="24" viewBox="0 0 24 24"><path fill="#5e5e5e" d="M13 7h-2v4H7v2h4v4h2v-4h4v-2h-4V7zm-1-5C6.48 2 2 6.48 2 12s4.48 10 10 10 10-4.48 10-10S17.52 2 12 2zm0 18c-4.41 0-8-3.59-8-8s3.59-8 8-8 8 3.59 8 8-3.59 8-8 8z"/></svg>
<div class="t" style="font-size:24.2px;line-height:24.2px;color:#5f5f5f;-webkit-text-stroke:0.35px #5f5f5f;letter-spacing:-0.45px;left:1200.1px;top:474.0px;transform:scaleX(0.9457);transform-origin:0 0;">CUSTOM FILTER</div>
<div class="t" style="font-size:26.6px;line-height:26.6px;color:#5f5f5f;-webkit-text-stroke:0.35px #5f5f5f;letter-spacing:-0.25px;left:897.7px;top:571.4px;">group by</div>
<svg class="b" style="left:1011.25px;top:573px" width="24" height="24" viewBox="0 0 24 24"><circle cx="12" cy="12" r="9.7" fill="none" stroke="#666" stroke-width="2.6"/></svg>
<div class="t" style="font-size:26.6px;line-height:26.6px;color:#5f5f5f;-webkit-text-stroke:0.35px #5f5f5f;letter-spacing:-0.01px;left:1049.1px;top:571.4px;">Hour (only for table)</div>
<svg class="b" style="left:1304.25px;top:573px" width="24" height="24" viewBox="0 0 24 24"><circle cx="12" cy="12" r="9.7" fill="#fff" stroke="#ea953d" stroke-width="2.6"/><circle cx="12" cy="12" r="5.4" fill="#ea953d"/></svg>
<div class="t" style="font-size:26.6px;line-height:26.6px;color:#5f5f5f;-webkit-text-stroke:0.35px #5f5f5f;letter-spacing:-0.45px;left:1342.4px;top:571.4px;transform:scaleX(0.9717);transform-origin:0 0;">Day</div>
<svg class="b" style="left:1409.25px;top:573px" width="24" height="24" viewBox="0 0 24 24"><circle cx="12" cy="12" r="9.7" fill="none" stroke="#666" stroke-width="2.6"/></svg>
<div class="t" style="font-size:26.6px;line-height:26.6px;color:#5f5f5f;-webkit-text-stroke:0.35px #5f5f5f;letter-spacing:-0.45px;left:1448.7px;top:571.4px;transform:scaleX(0.9335);transform-origin:0 0;">Week</div>
<svg class="b" style="left:1531.75px;top:573px" width="24" height="24" viewBox="0 0 24 24"><circle cx="12" cy="12" r="9.7" fill="none" stroke="#666" stroke-width="2.6"/></svg>
<div class="t" style="font-size:26.6px;line-height:26.6px;color:#5f5f5f;-webkit-text-stroke:0.35px #5f5f5f;letter-spacing:0.91px;left:1569.9px;top:571.4px;">Month</div>
<div class="b" style="left:2746px;top:560px;width:60px;height:60px;border-radius:50%;background:#ededed"></div>
<svg class="b" style="left:2756px;top:570px" width="40" height="40" viewBox="0 0 40 40"><path fill="#616161" d="M6 30 V27.5 L16 17.2 L22.3 22 L32.2 11.6 L34 13 V30 Z"/></svg>
<svg class="b" style="left:2849.5px;top:574.0px;" width="33" height="33" viewBox="0 0 24 24"><path fill="#616161" d="M3.5 18.49l6-6.01 4 4L22 6.92l-1.41-1.41-7.09 7.97-4-4L2 16.99z"/></svg>
<svg class="b" style="left:2939.5px;top:574.0px;" width="33" height="33" viewBox="0 0 24 24"><path fill="#616161" d="M5 9.2h3V19H5zM10.6 5h2.8v14h-2.8zm5.6 8H19v6h-2.8z"/></svg>
<svg class="b" style="left:3029.5px;top:575.0px;" width="33" height="33" viewBox="0 0 24 24"><path fill="#616161" d="M13 2.05v3.03c3.39.49 6 3.39 6 6.92 0 .9-.18 1.75-.48 2.54l2.6 1.53c.56-1.24.88-2.62.88-4.07 0-5.18-3.95-9.45-9-9.95zM12 19c-3.87 0-7-3.13-7-7 0-3.53 2.61-6.43 6-6.92V2.05c-5.06.5-9 4.76-9 9.95 0 5.52 4.47 10 9.99 10 3.31 0 6.24-1.61 8.06-4.09l-2.6-1.53C16.17 17.98 14.21 19 12 19z"/></svg>
<svg class="b" style="left:867.75px;top:664px" width="26" height="26" viewBox="0 0 26 26"><circle cx="13" cy="13" r="13" fill="#b2dd48"/><path d="M7 7 L19 19 M19 7 L7 19" stroke="#fff" stroke-width="2.5" fill="none"/></svg>
<div class="t" style="font-size:26.6px;line-height:26.6px;color:#5f5f5f;-webkit-text-stroke:0.35px #5f5f5f;letter-spacing:-0.06px;left:910.4px;top:664.4px;">Worktime (hours)</div>
<svg class="b" style="left:1131.8px;top:671.25px" width="20" height="10" viewBox="0 0 20 10"><path d="M0 0 H20 L10.0 10 Z" fill="#000"/></svg>
<svg class="b" style="left:1182px;top:664px" width="26" height="26" viewBox="0 0 26 26"><circle cx="13" cy="13" r="13" fill="#68a72f"/><path d="M7 7 L19 19 M19 7 L7 19" stroke="#fff" stroke-width="2.5" fill="none"/></svg>
<div class="t" style="font-size:26.6px;line-height:26.6px;color:#5f5f5f;-webkit-text-stroke:0.35px #5f5f5f;letter-spacing:-0.35px;left:1225.5px;top:664.4px;">Answers</div>
<svg class="b" style="left:1346.25px;top:671.25px" width="20" height="10" viewBox="0 0 20 10"><path d="M0 0 H20 L10.0 10 Z" fill="#000"/></svg>
<svg class="b" style="left:1394.75px;top:666.5px" width="22" height="22" viewBox="0 0 22 22"><circle cx="11" cy="11" r="9.2" fill="#fff" stroke="#cfcfcf" stroke-width="1.8"/></svg>
<div class="t" style="font-size:26.6px;line-height:26.6px;color:#5f5f5f;-webkit-text-stroke:0.35px #5f5f5f;letter-spacing:-0.25px;left:1426.2px;top:664.4px;">Add data type</div>
<svg class="b" style="left:1606.25px;top:671.25px" width="20" height="10" viewBox="0 0 20 10"><path d="M0 0 H20 L10.0 10 Z" fill="#000"/></svg>
<svg class="b" style="left:838px;top:700px" width="2298" height="576" viewBox="838 700 2298 576" font-family="Liberation Sans, Arial, sans-serif">
<line x1="934" x2="3123.0" y1="771.70" y2="771.70" stroke="#000" stroke-opacity="0.12" stroke-width="2"/>
<line x1="934" x2="3123.0" y1="818.36" y2="818.36" stroke="#000" stroke-opacity="0.12" stroke-width="2"/>
<line x1="934" x2="3123.0" y1="865.03" y2="865.03" stroke="#000" stroke-opacity="0.12" stroke-width="2"/>
<line x1="934" x2="3123.0" y1="911.69" y2="911.69" stroke="#000" stroke-opacity="0.12" stroke-width="2"/>
<line x1="934" x2="3123.0" y1="958.35" y2="958.35" stroke="#000" stroke-opacity="0.12" stroke-width="2"/>
<line x1="934" x2="3123.0" y1="1005.01" y2="1005.01" stroke="#000" stroke-opacity="0.12" stroke-width="2"/>
<line x1="934" x2="3123.0" y1="1051.67" y2="1051.67" stroke="#000" stroke-opacity="0.12" stroke-width="2"/>
<line x1="934" x2="3123.0" y1="1098.34" y2="1098.34" stroke="#000" stroke-opacity="0.12" stroke-width="2"/>
<line x1="934" x2="3123.0" y1="1145.00" y2="1145.00" stroke="#000" stroke-opacity="0.25" stroke-width="2"/>
<line x1="954.00" x2="954.00" y1="771.70" y2="1165" stroke="#000" stroke-opacity="0.38" stroke-width="2"/>
<line x1="1026.27" x2="1026.27" y1="771.70" y2="1165" stroke="#000" stroke-opacity="0.12" stroke-width="2"/>
<line x1="1098.53" x2="1098.53" y1="771.70" y2="1165" stroke="#000" stroke-opacity="0.12" stroke-width="2"/>
<line x1="1170.80" x2="1170.80" y1="771.70" y2="1165" stroke="#000" stroke-opacity="0.12" stroke-width="2"/>
<line x1="1243.07" x2="1243.07" y1="771.70" y2="1165" stroke="#000" stroke-opacity="0.12" stroke-width="2"/>
<line x1="1315.33" x2="1315.33" y1="771.70" y2="1165" stroke="#000" stroke-opacity="0.12" stroke-width="2"/>
<line x1="1387.60" x2="1387.60" y1="771.70" y2="1165" stroke="#000" stroke-opacity="0.12" stroke-width="2"/>
<line x1="1459.87" x2="1459.87" y1="771.70" y2="1165" stroke="#000" stroke-opacity="0.12" stroke-width="2"/>
<line x1="1532.13" x2="1532.13" y1="771.70" y2="1165" stroke="#000" stroke-opacity="0.12" stroke-width="2"/>
<line x1="1604.40" x2="1604.40" y1="771.70" y2="1165" stroke="#000" stroke-opacity="0.12" stroke-width="2"/>
<line x1="1676.67" x2="1676.67" y1="771.70" y2="1165" stroke="#000" stroke-opacity="0.12" stroke-width="2"/>
<line x1="1748.93" x2="1748.93" y1="771.70" y2="1165" stroke="#000" stroke-opacity="0.12" stroke-width="2"/>
<line x1="1821.20" x2="1821.20" y1="771.70" y2="1165" stroke="#000" stroke-opacity="0.12" stroke-width="2"/>
<line x1="1893.47" x2="1893.47" y1="771.70" y2="1165" stroke="#000" stroke-opacity="0.12" stroke-width="2"/>
<line x1="1965.73" x2="1965.73" y1="771.70" y2="1165" stroke="#000" stroke-opacity="0.12" stroke-width="2"/>
<line x1="2038.00" x2="2038.00" y1="771.70" y2="1165" stroke="#000" stroke-opacity="0.12" stroke-width="2"/>
<line x1="2110.27" x2="2110.27" y1="771.70" y2="1165" stroke="#000" stroke-opacity="0.12" stroke-width="2"/>
<line x1="2182.53" x2="2182.53" y1="771.70" y2="1165" stroke="#000" stroke-opacity="0.12" stroke-width="2"/>
<line x1="2254.80" x2="2254.80" y1="771.70" y2="1165" stroke="#000" stroke-opacity="0.12" stroke-width="2"/>
<line x1="2327.07" x2="2327.07" y1="771.70" y2="1165" stroke="#000" stroke-opacity="0.12" stroke-width="2"/>
<line x1="2399.33" x2="2399.33" y1="771.70" y2="1165" stroke="#000" stroke-opacity="0.12" stroke-width="2"/>
<line x1="2471.60" x2="2471.60" y1="771.70" y2="1165" stroke="#000" stroke-opacity="0.12" stroke-width="2"/>
<line x1="2543.87" x2="2543.87" y1="771.70" y2="1165" stroke="#000" stroke-opacity="0.12" stroke-width="2"/>
<line x1="2616.13" x2="2616.13" y1="771.70" y2="1165" stroke="#000" stroke-opacity="0.12" stroke-width="2"/>
<line x1="2688.40" x2="2688.40" y1="771.70" y2="1165" stroke="#000" stroke-opacity="0.12" stroke-width="2"/>
<line x1="2760.67" x2="2760.67" y1="771.70" y2="1165" stroke="#000" stroke-opacity="0.12" stroke-width="2"/>
<line x1="2832.93" x2="2832.93" y1="771.70" y2="1165" stroke="#000" stroke-opacity="0.12" stroke-width="2"/>
<line x1="2905.20" x2="2905.20" y1="771.70" y2="1165" stroke="#000" stroke-opacity="0.12" stroke-width="2"/>
<line x1="2977.47" x2="2977.47" y1="771.70" y2="1165" stroke="#000" stroke-opacity="0.12" stroke-width="2"/>
<line x1="3049.73" x2="3049.73" y1="771.70" y2="1165" stroke="#000" stroke-opacity="0.12" stroke-width="2"/>
<line x1="3122.00" x2="3122.00" y1="771.70" y2="1165" stroke="#000" stroke-opacity="0.12" stroke-width="2"/>
<polygon points="954.0,1145.0 954.0,1145.0 1026.3,1145.0 1098.5,1145.0 1170.8,1145.0 1243.1,1145.0 1315.3,1145.0 1387.6,1145.0 1459.9,1145.0 1532.1,1145.0 1604.4,1145.0 1676.7,1145.0 1748.9,1145.0 1821.2,1145.0 1893.5,1145.0 1965.7,1145.0 2038.0,1145.0 2110.3,1145.0 2182.5,1145.0 2254.8,1145.0 2327.1,1060.5 2399.3,1068.5 2471.6,1070.3 2543.9,1145.0 2616.1,1076.4 2688.4,1145.0 2760.7,1145.0 2832.9,1034.9 2905.2,1145.0 2977.5,794.1 3049.7,1017.1 3122.0,872.5 3122.0,1145.0" fill="#a5cd3c" fill-opacity="0.45"/>
<polyline points="954.0,1145.0 1026.3,1145.0 1098.5,1145.0 1170.8,1145.0 1243.1,1145.0 1315.3,1145.0 1387.6,1145.0 1459.9,1145.0 1532.1,1145.0 1604.4,1145.0 1676.7,1145.0 1748.9,1145.0 1821.2,1145.0 1893.5,1145.0 1965.7,1145.0 2038.0,1145.0 2110.3,1145.0 2182.5,1145.0 2254.8,1145.0 2327.1,1060.5 2399.3,1068.5 2471.6,1070.3 2543.9,1145.0 2616.1,1076.4 2688.4,1145.0 2760.7,1145.0 2832.9,1034.9 2905.2,1145.0 2977.5,794.1 3049.7,1017.1 3122.0,872.5" fill="none" stroke="#a8d242" stroke-width="6.5" stroke-linejoin="round" stroke-linecap="round"/>
<circle cx="954.0" cy="1145.0" r="5.2" fill="#a8d242"/>
<circle cx="1026.3" cy="1145.0" r="5.2" fill="#a8d242"/>
<circle cx="1098.5" cy="1145.0" r="5.2" fill="#a8d242"/>
<circle cx="1170.8" cy="1145.0" r="5.2" fill="#a8d242"/>
<circle cx="1243.1" cy="1145.0" r="5.2" fill="#a8d242"/>
<circle cx="1315.3" cy="1145.0" r="5.2" fill="#a8d242"/>
<circle cx="1387.6" cy="1145.0" r="5.2" fill="#a8d242"/>
<circle cx="1459.9" cy="1145.0" r="5.2" fill="#a8d242"/>
<circle cx="1532.1" cy="1145.0" r="5.2" fill="#a8d242"/>
<circle cx="1604.4" cy="1145.0" r="5.2" fill="#a8d242"/>
<circle cx="1676.7" cy="1145.0" r="5.2" fill="#a8d242"/>
<circle cx="1748.9" cy="1145.0" r="5.2" fill="#a8d242"/>
<circle cx="1821.2" cy="1145.0" r="5.2" fill="#a8d242"/>
<circle cx="1893.5" cy="1145.0" r="5.2" fill="#a8d242"/>
<circle cx="1965.7" cy="1145.0" r="5.2" fill="#a8d242"/>
<circle cx="2038.0" cy="1145.0" r="5.2" fill="#a8d242"/>
<circle cx="2110.3" cy="1145.0" r="5.2" fill="#a8d242"/>
<circle cx="2182.5" cy="1145.0" r="5.2" fill="#a8d242"/>
<circle cx="2254.8" cy="1145.0" r="5.2" fill="#a8d242"/>
<circle cx="2327.1" cy="1060.5" r="5.2" fill="#a8d242"/>
<circle cx="2399.3" cy="1068.5" r="5.2" fill="#a8d242"/>
<circle cx="2471.6" cy="1070.3" r="5.2" fill="#a8d242"/>
<circle cx="2543.9" cy="1145.0" r="5.2" fill="#a8d242"/>
<circle cx="2616.1" cy="1076.4" r="5.2" fill="#a8d242"/>
<circle cx="2688.4" cy="1145.0" r="5.2" fill="#a8d242"/>
<circle cx="2760.7" cy="1145.0" r="5.2" fill="#a8d242"/>
<circle cx="2832.9" cy="1034.9" r="5.2" fill="#a8d242"/>
<circle cx="2905.2" cy="1145.0" r="5.2" fill="#a8d242"/>
<circle cx="2977.5" cy="794.1" r="5.2" fill="#a8d242"/>
<circle cx="3049.7" cy="1017.1" r="5.2" fill="#a8d242"/>
<circle cx="3122.0" cy="872.5" r="5.2" fill="#a8d242"/>
<line x1="2254.8" x2="2543.9" y1="1145.0" y2="1145.0" stroke="#69a82f" stroke-width="6.5"/>
<line x1="2543.9" x2="2688.4" y1="1145.0" y2="1145.0" stroke="#69a82f" stroke-width="6.5"/>
<line x1="2760.7" x2="2905.2" y1="1145.0" y2="1145.0" stroke="#69a82f" stroke-width="6.5"/>
<line x1="2905.2" x2="3122.0" y1="1145.0" y2="1145.0" stroke="#69a82f" stroke-width="6.5"/>
<circle cx="2327.1" cy="1145.0" r="5.2" fill="#69a82f"/>
<circle cx="2399.3" cy="1145.0" r="5.2" fill="#69a82f"/>
<circle cx="2471.6" cy="1145.0" r="5.2" fill="#69a82f"/>
<circle cx="2543.9" cy="1145.0" r="5.2" fill="#a8d242"/>
<circle cx="2616.1" cy="1145.0" r="5.2" fill="#69a82f"/>
<circle cx="2688.4" cy="1145.0" r="5.2" fill="#a8d242"/>
<circle cx="2760.7" cy="1145.0" r="5.2" fill="#a8d242"/>
<circle cx="2832.9" cy="1145.0" r="5.2" fill="#69a82f"/>
<circle cx="2905.2" cy="1145.0" r="5.2" fill="#a8d242"/>
<circle cx="2977.5" cy="1145.0" r="5.2" fill="#69a82f"/>
<circle cx="3049.7" cy="1145.0" r="5.2" fill="#69a82f"/>
<circle cx="3122.0" cy="1145.0" r="5.2" fill="#69a82f"/>
<circle cx="3122.0" cy="1145.0" r="4.2" fill="#a8d242" stroke="#69a82f" stroke-width="2"/>
<text x="933.8" y="780.3" text-anchor="end" font-size="24.5" fill="#666">4.0</text>
<text x="933.8" y="827.0" text-anchor="end" font-size="24.5" fill="#666">3.5</text>
<text x="933.8" y="873.6" text-anchor="end" font-size="24.5" fill="#666">3.0</text>
<text x="933.8" y="920.3" text-anchor="end" font-size="24.5" fill="#666">2.5</text>
<text x="933.8" y="967.0" text-anchor="end" font-size="24.5" fill="#666">2.0</text>
<text x="933.8" y="1013.6" text-anchor="end" font-size="24.5" fill="#666">1.5</text>
<text x="933.8" y="1060.3" text-anchor="end" font-size="24.5" fill="#666">1.0</text>
<text x="933.8" y="1106.9" text-anchor="end" font-size="24.5" fill="#666">0.5</text>
<text x="933.8" y="1153.6" text-anchor="end" font-size="24.5" fill="#666">0</text>
<text transform="translate(950.8,1164.2) rotate(-34.6)" text-anchor="end" font-size="24" fill="#666" dy="8.5">05/26/2021</text>
<text transform="translate(1023.1,1164.2) rotate(-34.6)" text-anchor="end" font-size="24" fill="#666" dy="8.5">05/27/2021</text>
<text transform="translate(1095.3,1164.2) rotate(-34.6)" text-anchor="end" font-size="24" fill="#666" dy="8.5">05/28/2021</text>
<text transform="translate(1167.6,1164.2) rotate(-34.6)" text-anchor="end" font-size="24" fill="#666" dy="8.5">05/29/2021</text>
<text transform="translate(1239.9,1164.2) rotate(-34.6)" text-anchor="end" font-size="24" fill="#666" dy="8.5">05/30/2021</text>
<text transform="translate(1312.1,1164.2) rotate(-34.6)" text-anchor="end" font-size="24" fill="#666" dy="8.5">05/31/2021</text>
<text transform="translate(1384.4,1164.2) rotate(-34.6)" text-anchor="end" font-size="24" fill="#666" dy="8.5">06/01/2021</text>
<text transform="translate(1456.7,1164.2) rotate(-34.6)" text-anchor="end" font-size="24" fill="#666" dy="8.5">06/02/2021</text>
<text transform="translate(1528.9,1164.2) rotate(-34.6)" text-anchor="end" font-size="24" fill="#666" dy="8.5">06/03/2021</text>
<text transform="translate(1601.2,1164.2) rotate(-34.6)" text-anchor="end" font-size="24" fill="#666" dy="8.5">06/04/2021</text>
<text transform="translate(1673.5,1164.2) rotate(-34.6)" text-anchor="end" font-size="24" fill="#666" dy="8.5">06/05/2021</text>
<text transform="translate(1745.7,1164.2) rotate(-34.6)" text-anchor="end" font-size="24" fill="#666" dy="8.5">06/06/2021</text>
<text transform="translate(1818.0,1164.2) rotate(-34.6)" text-anchor="end" font-size="24" fill="#666" dy="8.5">06/07/2021</text>
<text transform="translate(1890.3,1164.2) rotate(-34.6)" text-anchor="end" font-size="24" fill="#666" dy="8.5">06/08/2021</text>
<text transform="translate(1962.5,1164.2) rotate(-34.6)" text-anchor="end" font-size="24" fill="#666" dy="8.5">06/09/2021</text>
<text transform="translate(2034.8,1164.2) rotate(-34.6)" text-anchor="end" font-size="24" fill="#666" dy="8.5">06/10/2021</text>
<text transform="translate(2107.1,1164.2) rotate(-34.6)" text-anchor="end" font-size="24" fill="#666" dy="8.5">06/11/2021</text>
<text transform="translate(2179.3,1164.2) rotate(-34.6)" text-anchor="end" font-size="24" fill="#666" dy="8.5">06/12/2021</text>
<text transform="translate(2251.6,1164.2) rotate(-34.6)" text-anchor="end" font-size="24" fill="#666" dy="8.5">06/13/2021</text>
<text transform="translate(2323.9,1164.2) rotate(-34.6)" text-anchor="end" font-size="24" fill="#666" dy="8.5">06/14/2021</text>
<text transform="translate(2396.1,1164.2) rotate(-34.6)" text-anchor="end" font-size="24" fill="#666" dy="8.5">06/15/2021</text>
<text transform="translate(2468.4,1164.2) rotate(-34.6)" text-anchor="end" font-size="24" fill="#666" dy="8.5">06/16/2021</text>
<text transform="translate(2540.7,1164.2) rotate(-34.6)" text-anchor="end" font-size="24" fill="#666" dy="8.5">06/17/2021</text>
<text transform="translate(2612.9,1164.2) rotate(-34.6)" text-anchor="end" font-size="24" fill="#666" dy="8.5">06/18/2021</text>
<text transform="translate(2685.2,1164.2) rotate(-34.6)" text-anchor="end" font-size="24" fill="#666" dy="8.5">06/19/2021</text>
<text transform="translate(2757.5,1164.2) rotate(-34.6)" text-anchor="end" font-size="24" fill="#666" dy="8.5">06/20/2021</text>
<text transform="translate(2829.7,1164.2) rotate(-34.6)" text-anchor="end" font-size="24" fill="#666" dy="8.5">06/21/2021</text>
<text transform="translate(2902.0,1164.2) rotate(-34.6)" text-anchor="end" font-size="24" fill="#666" dy="8.5">06/22/2021</text>
<text transform="translate(2974.3,1164.2) rotate(-34.6)" text-anchor="end" font-size="24" fill="#666" dy="8.5">06/23/2021</text>
<text transform="translate(3046.5,1164.2) rotate(-34.6)" text-anchor="end" font-size="24" fill="#666" dy="8.5">06/24/2021</text>
<text transform="translate(3118.8,1164.2) rotate(-34.6)" text-anchor="end" font-size="24" fill="#666" dy="8.5">06/25/2021</text>
</svg>
<div class="b" style="left:838px;top:1276px;width:2298px;height:2px;background:#dedede"></div>
<div class="b" style="left:838px;top:1278px;width:2298px;height:156px;background:#fafafa"></div>
<div class="b" style="left:838px;top:1434px;width:2298px;height:2px;background:#dedede"></div>
<div class="t" style="font-size:26.6px;line-height:26.6px;color:#5f5f5f;-webkit-text-stroke:0.35px #5f5f5f;letter-spacing:0.03px;left:923.3px;top:1313.8px;">Worktime</div>
<div class="t" style="font-size:41px;line-height:41px;color:#555;font-weight:700;-webkit-text-stroke:0.45px #555;letter-spacing:-0.3px;left:927.6px;top:1353.5px;transform:scaleX(0.9874);transform-origin:0 0;">12:29</div>
<div class="t" style="font-size:26.6px;line-height:26.6px;color:#5f5f5f;-webkit-text-stroke:0.35px #5f5f5f;letter-spacing:-0.23px;left:1107.6px;top:1313.8px;">Finished c...</div>
<div class="t" style="font-size:41px;line-height:41px;color:#555;font-weight:700;left:1169.5px;top:1353.5px;">0</div>
<div class="t" style="font-size:26.6px;line-height:26.6px;color:#5f5f5f;-webkit-text-stroke:0.35px #5f5f5f;letter-spacing:-0.2px;left:1331.8px;top:1313.8px;">Answers</div>
<div class="t" style="font-size:41px;line-height:41px;color:#555;font-weight:700;left:1371.0px;top:1353.5px;">0</div>
<div class="t" style="font-size:26.6px;line-height:26.6px;color:#5f5f5f;-webkit-text-stroke:0.35px #5f5f5f;letter-spacing:-0.38px;left:1511.9px;top:1313.8px;">Created ti...</div>
<div class="t" style="font-size:41px;line-height:41px;color:#555;font-weight:700;left:1572.7px;top:1353.5px;">2</div>
<div class="t" style="font-size:26.6px;line-height:26.6px;color:#5f5f5f;-webkit-text-stroke:0.35px #5f5f5f;letter-spacing:-0.35px;left:1712.3px;top:1313.8px;">Resolved t...</div>
<div class="t" style="font-size:41px;line-height:41px;color:#555;font-weight:700;left:1774.1px;top:1353.5px;">0</div>
<div class="t" style="font-size:26.6px;line-height:26.6px;color:#5f5f5f;-webkit-text-stroke:0.35px #5f5f5f;letter-spacing:-0.16px;left:1914.5px;top:1313.8px;">Positive ra...</div>
<div class="t" style="font-size:41px;line-height:41px;color:#555;font-weight:700;left:1975.7px;top:1353.5px;">0</div>
<div class="t" style="font-size:26.6px;line-height:26.6px;color:#5f5f5f;-webkit-text-stroke:0.35px #5f5f5f;letter-spacing:-0.17px;left:2116.1px;top:1313.8px;">Negative r...</div>
<div class="t" style="font-size:41px;line-height:41px;color:#555;font-weight:700;left:2177.2px;top:1353.5px;">0</div>
<div class="t" style="font-size:26.6px;line-height:26.6px;color:#5f5f5f;-webkit-text-stroke:0.35px #5f5f5f;letter-spacing:-0.06px;left:2360.5px;top:1313.8px;">Calls</div>
<div class="t" style="font-size:41px;line-height:41px;color:#555;font-weight:700;left:2378.8px;top:1353.5px;">0</div>
<div class="t" style="font-size:26.6px;line-height:26.6px;color:#5f5f5f;-webkit-text-stroke:0.35px #5f5f5f;letter-spacing:-0.32px;left:2519.9px;top:1313.8px;">Outgoing ...</div>
<div class="t" style="font-size:41px;line-height:41px;color:#555;font-weight:700;left:2580.3px;top:1353.5px;">0</div>
<div class="t" style="font-size:26.6px;line-height:26.6px;color:#5f5f5f;-webkit-text-stroke:0.35px #5f5f5f;letter-spacing:-0.45px;left:2721.7px;top:1313.8px;transform:scaleX(0.9979);transform-origin:0 0;">Chat mes...</div>
<div class="t" style="font-size:41px;line-height:41px;color:#555;font-weight:700;left:2781.9px;top:1353.5px;">0</div>
<div class="t" style="font-size:26.6px;line-height:26.6px;color:#5f5f5f;-webkit-text-stroke:0.35px #5f5f5f;letter-spacing:0.07px;left:2959.8px;top:1313.8px;">Chats</div>
<div class="t" style="font-size:41px;line-height:41px;color:#555;font-weight:700;left:2983.4px;top:1353.5px;">0</div>
<div class="b" style="left:838px;top:1436px;width:2298px;height:171px;background:#f7f7f7"></div>
<div class="b" style="left:898px;top:1456px;width:298px;height:61px;border-radius:5px;background:#fff;box-shadow:0 2px 5px rgba(0,0,0,.22)"></div>
<div class="t" style="font-size:26.6px;line-height:26.6px;color:#5f5f5f;-webkit-text-stroke:0.35px #5f5f5f;letter-spacing:-0.45px;left:937.3px;top:1473.9px;transform:scaleX(0.9154);transform-origin:0 0;">EXPORT TO CSV</div>
<svg class="b" style="left:1146.25px;top:1484px" width="20" height="10" viewBox="0 0 20 10"><path d="M0 0 H20 L10.0 10 Z" fill="#000"/></svg>
<svg class="b" style="left:845px;top:1563px" width="14" height="20" viewBox="0 0 14 20"><path d="M7 0.8 V17 M1.9 12.3 L7 17.6 L12.1 12.3" fill="none" stroke="#555" stroke-width="2.7"/></svg>
<div class="t" style="font-size:24.8px;line-height:24.8px;color:#5f5f5f;-webkit-text-stroke:0.35px #5f5f5f;letter-spacing:-0.18px;left:868.8px;top:1559.2px;">Date</div>
<div class="b" style="left:840px;top:1602px;width:182px;height:5px;background:#5f5f5f"></div>
<div class="b" style="left:838px;top:1606px;width:2298px;height:2px;background:#dcdcdc"></div>
<svg class="b" style="left:1031.25px;top:1562.6px" width="14" height="20" viewBox="0 0 14 20"><path d="M3.7 14.4 V4 M10.3 5.6 V16" fill="none" stroke="#9e9e9e" stroke-width="1.7"/><path d="M0.3 5.5 L3.7 0.9 L7.1 5.5 Z M6.9 14.5 L10.3 19.1 L13.7 14.5 Z" fill="#9e9e9e"/></svg>
<div class="t" style="left:1056.2px;top:1559.2px;width:143.8px;height:34px;overflow:hidden;font-size:24.8px;line-height:24.8px;color:#9e9e9e;letter-spacing:-0.3px;-webkit-text-stroke:0.3px #9e9e9e">Worktime</div>
<svg class="b" style="left:1217.00px;top:1562.6px" width="14" height="20" viewBox="0 0 14 20"><path d="M3.7 14.4 V4 M10.3 5.6 V16" fill="none" stroke="#9e9e9e" stroke-width="1.7"/><path d="M0.3 5.5 L3.7 0.9 L7.1 5.5 Z M6.9 14.5 L10.3 19.1 L13.7 14.5 Z" fill="#9e9e9e"/></svg>
<div class="t" style="left:1241.0px;top:1559.2px;width:152.6px;height:34px;overflow:hidden;font-size:24.8px;line-height:24.8px;color:#9e9e9e;letter-spacing:-0.3px;-webkit-text-stroke:0.3px #9e9e9e">Finished chats</div>
<svg class="b" style="left:1403.50px;top:1562.6px" width="14" height="20" viewBox="0 0 14 20"><path d="M3.7 14.4 V4 M10.3 5.6 V16" fill="none" stroke="#9e9e9e" stroke-width="1.7"/><path d="M0.3 5.5 L3.7 0.9 L7.1 5.5 Z M6.9 14.5 L10.3 19.1 L13.7 14.5 Z" fill="#9e9e9e"/></svg>
<div class="t" style="left:1428.5px;top:1559.2px;width:151.5px;height:34px;overflow:hidden;font-size:24.8px;line-height:24.8px;color:#9e9e9e;letter-spacing:-0.3px;-webkit-text-stroke:0.3px #9e9e9e">Answers</div>
<svg class="b" style="left:1591.60px;top:1562.6px" width="14" height="20" viewBox="0 0 14 20"><path d="M3.7 14.4 V4 M10.3 5.6 V16" fill="none" stroke="#9e9e9e" stroke-width="1.7"/><path d="M0.3 5.5 L3.7 0.9 L7.1 5.5 Z M6.9 14.5 L10.3 19.1 L13.7 14.5 Z" fill="#9e9e9e"/></svg>
<div class="t" style="left:1615.6px;top:1559.2px;width:154.2px;height:34px;overflow:hidden;font-size:24.8px;line-height:24.8px;color:#9e9e9e;letter-spacing:-0.3px;-webkit-text-stroke:0.3px #9e9e9e">Created tickets</div>
<svg class="b" style="left:1779.50px;top:1562.6px" width="14" height="20" viewBox="0 0 14 20"><path d="M3.7 14.4 V4 M10.3 5.6 V16" fill="none" stroke="#9e9e9e" stroke-width="1.7"/><path d="M0.3 5.5 L3.7 0.9 L7.1 5.5 Z M6.9 14.5 L10.3 19.1 L13.7 14.5 Z" fill="#9e9e9e"/></svg>
<div class="t" style="left:1803.0px;top:1559.2px;width:155.2px;height:34px;overflow:hidden;font-size:24.8px;line-height:24.8px;color:#9e9e9e;letter-spacing:-0.3px;-webkit-text-stroke:0.3px #9e9e9e">Resolved tickets</div>
<svg class="b" style="left:1967.50px;top:1562.6px" width="14" height="20" viewBox="0 0 14 20"><path d="M3.7 14.4 V4 M10.3 5.6 V16" fill="none" stroke="#9e9e9e" stroke-width="1.7"/><path d="M0.3 5.5 L3.7 0.9 L7.1 5.5 Z M6.9 14.5 L10.3 19.1 L13.7 14.5 Z" fill="#9e9e9e"/></svg>
<div class="t" style="left:1991.3px;top:1559.2px;width:153.7px;height:34px;overflow:hidden;font-size:24.8px;line-height:24.8px;color:#9e9e9e;letter-spacing:-0.3px;-webkit-text-stroke:0.3px #9e9e9e">Positive ratings</div>
<svg class="b" style="left:2157.00px;top:1562.6px" width="14" height="20" viewBox="0 0 14 20"><path d="M3.7 14.4 V4 M10.3 5.6 V16" fill="none" stroke="#9e9e9e" stroke-width="1.7"/><path d="M0.3 5.5 L3.7 0.9 L7.1 5.5 Z M6.9 14.5 L10.3 19.1 L13.7 14.5 Z" fill="#9e9e9e"/></svg>
<div class="t" style="left:2181.0px;top:1559.2px;width:157.0px;height:34px;overflow:hidden;font-size:24.8px;line-height:24.8px;color:#9e9e9e;letter-spacing:-0.3px;-webkit-text-stroke:0.3px #9e9e9e">Negative ratings</div>
<svg class="b" style="left:2347.50px;top:1562.6px" width="14" height="20" viewBox="0 0 14 20"><path d="M3.7 14.4 V4 M10.3 5.6 V16" fill="none" stroke="#9e9e9e" stroke-width="1.7"/><path d="M0.3 5.5 L3.7 0.9 L7.1 5.5 Z M6.9 14.5 L10.3 19.1 L13.7 14.5 Z" fill="#9e9e9e"/></svg>
<div class="t" style="left:2371.8px;top:1559.2px;width:148.2px;height:34px;overflow:hidden;font-size:24.8px;line-height:24.8px;color:#9e9e9e;letter-spacing:-0.3px;-webkit-text-stroke:0.3px #9e9e9e">Calls</div>
<svg class="b" style="left:2537.00px;top:1562.6px" width="14" height="20" viewBox="0 0 14 20"><path d="M3.7 14.4 V4 M10.3 5.6 V16" fill="none" stroke="#9e9e9e" stroke-width="1.7"/><path d="M0.3 5.5 L3.7 0.9 L7.1 5.5 Z M6.9 14.5 L10.3 19.1 L13.7 14.5 Z" fill="#9e9e9e"/></svg>
<div class="t" style="left:2561.4px;top:1559.2px;width:156.1px;height:34px;overflow:hidden;font-size:24.8px;line-height:24.8px;color:#9e9e9e;letter-spacing:-0.3px;-webkit-text-stroke:0.3px #9e9e9e">Outgoing calls</div>
<svg class="b" style="left:2727.00px;top:1562.6px" width="14" height="20" viewBox="0 0 14 20"><path d="M3.7 14.4 V4 M10.3 5.6 V16" fill="none" stroke="#9e9e9e" stroke-width="1.7"/><path d="M0.3 5.5 L3.7 0.9 L7.1 5.5 Z M6.9 14.5 L10.3 19.1 L13.7 14.5 Z" fill="#9e9e9e"/></svg>
<div class="t" style="left:2751.3px;top:1559.2px;width:156.2px;height:34px;overflow:hidden;font-size:24.8px;line-height:24.8px;color:#9e9e9e;letter-spacing:-0.3px;-webkit-text-stroke:0.3px #9e9e9e">Chat messages</div>
<svg class="b" style="left:2917.00px;top:1562.6px" width="14" height="20" viewBox="0 0 14 20"><path d="M3.7 14.4 V4 M10.3 5.6 V16" fill="none" stroke="#9e9e9e" stroke-width="1.7"/><path d="M0.3 5.5 L3.7 0.9 L7.1 5.5 Z M6.9 14.5 L10.3 19.1 L13.7 14.5 Z" fill="#9e9e9e"/></svg>
<div class="t" style="left:2941.3px;top:1559.2px;width:158.7px;height:34px;overflow:hidden;font-size:24.8px;line-height:24.8px;color:#9e9e9e;letter-spacing:-0.3px;-webkit-text-stroke:0.3px #9e9e9e">Chats</div>
<div class="c" style="left:838px;top:1608px;width:2282px;height:141px;background:#fff">
<div class="t" style="font-size:26.6px;line-height:26.6px;color:#5f5f5f;-webkit-text-stroke:0.35px #5f5f5f;letter-spacing:0.27px;left:31.5px;top:15.9px;">06/25/20...</div>
<div class="t" style="font-size:26.6px;line-height:26.6px;color:#5f5f5f;-webkit-text-stroke:0.35px #5f5f5f;letter-spacing:-0.45px;left:188.2px;top:15.9px;">2:55</div>
<div class="t" style="font-size:26.6px;line-height:26.6px;color:#5f5f5f;-webkit-text-stroke:0.35px #5f5f5f;left:373.5px;top:15.9px;">0</div>
<div class="t" style="font-size:26.6px;line-height:26.6px;color:#5f5f5f;-webkit-text-stroke:0.35px #5f5f5f;left:748.0px;top:15.9px;">2</div>
<div class="t" style="font-size:26.6px;line-height:26.6px;color:#5f5f5f;-webkit-text-stroke:0.35px #5f5f5f;left:935.6px;top:15.9px;">0</div>
<div class="t" style="font-size:21.6px;line-height:21.6px;color:#555;font-weight:700;-webkit-text-stroke:0.45px #555;left:559.6px;top:18.1px;">0</div>
<div class="t" style="font-size:21.6px;line-height:21.6px;color:#5f5f5f;-webkit-text-stroke:0.35px #5f5f5f;letter-spacing:-0.39px;left:577.0px;top:18.1px;">/ 0 per hour</div>
<div class="t" style="font-size:21.6px;line-height:21.6px;color:#555;font-weight:700;-webkit-text-stroke:0.45px #555;left:1123.7px;top:18.1px;">0</div>
<div class="t" style="font-size:21.6px;line-height:21.6px;color:#5f5f5f;-webkit-text-stroke:0.35px #5f5f5f;letter-spacing:-0.39px;left:1141.1px;top:18.1px;">/ 0 per hour</div>
<div class="t" style="font-size:21.6px;line-height:21.6px;color:#555;font-weight:700;-webkit-text-stroke:0.45px #555;left:1313.7px;top:18.1px;">0</div>
<div class="t" style="font-size:21.6px;line-height:21.6px;color:#5f5f5f;-webkit-text-stroke:0.35px #5f5f5f;letter-spacing:-0.39px;left:1331.1px;top:18.1px;">/ 0 per hour</div>
<div class="t" style="font-size:21.6px;line-height:21.6px;color:#555;font-weight:700;-webkit-text-stroke:0.45px #555;left:1503.7px;top:18.1px;">0</div>
<div class="t" style="font-size:21.6px;line-height:21.6px;color:#5f5f5f;-webkit-text-stroke:0.35px #5f5f5f;letter-spacing:-0.39px;left:1521.1px;top:18.1px;">/ 0 per hour</div>
<div class="t" style="font-size:21.6px;line-height:21.6px;color:#555;font-weight:700;-webkit-text-stroke:0.45px #555;left:1693.7px;top:18.1px;">0</div>
<div class="t" style="font-size:21.6px;line-height:21.6px;color:#5f5f5f;-webkit-text-stroke:0.35px #5f5f5f;letter-spacing:-0.39px;left:1711.1px;top:18.1px;">/ 0 per hour</div>
<div class="t" style="font-size:21.6px;line-height:21.6px;color:#555;font-weight:700;-webkit-text-stroke:0.45px #555;left:1883.7px;top:18.1px;">0</div>
<div class="t" style="font-size:21.6px;line-height:21.6px;color:#5f5f5f;-webkit-text-stroke:0.35px #5f5f5f;letter-spacing:-0.39px;left:1901.1px;top:18.1px;">/ 0 per hour</div>
<div class="t" style="font-size:21.6px;line-height:21.6px;color:#555;font-weight:700;-webkit-text-stroke:0.45px #555;left:2073.7px;top:18.1px;">0</div>
<div class="t" style="font-size:21.6px;line-height:21.6px;color:#5f5f5f;-webkit-text-stroke:0.35px #5f5f5f;letter-spacing:-0.39px;left:2091.1px;top:18.1px;">/ 0 per hour</div>
<div class="b" style="left:0;top:58.1px;width:2282px;height:2px;background:#dedede"></div>
<div class="t" style="font-size:26.6px;line-height:26.6px;color:#5f5f5f;-webkit-text-stroke:0.35px #5f5f5f;letter-spacing:0.27px;left:31.5px;top:75.9px;">06/24/20...</div>
<div class="t" style="font-size:26.6px;line-height:26.6px;color:#5f5f5f;-webkit-text-stroke:0.35px #5f5f5f;letter-spacing:-0.16px;left:187.5px;top:75.9px;">1:22</div>
<div class="t" style="font-size:26.6px;line-height:26.6px;color:#5f5f5f;-webkit-text-stroke:0.35px #5f5f5f;left:373.5px;top:75.9px;">0</div>
<div class="t" style="font-size:26.6px;line-height:26.6px;color:#5f5f5f;-webkit-text-stroke:0.35px #5f5f5f;left:748.3px;top:75.9px;">0</div>
<div class="t" style="font-size:26.6px;line-height:26.6px;color:#5f5f5f;-webkit-text-stroke:0.35px #5f5f5f;left:935.6px;top:75.9px;">0</div>
<div class="t" style="font-size:21.6px;line-height:21.6px;color:#555;font-weight:700;-webkit-text-stroke:0.45px #555;left:559.6px;top:78.1px;">0</div>
<div class="t" style="font-size:21.6px;line-height:21.6px;color:#5f5f5f;-webkit-text-stroke:0.35px #5f5f5f;letter-spacing:-0.39px;left:577.0px;top:78.1px;">/ 0 per hour</div>
<div class="t" style="font-size:21.6px;line-height:21.6px;color:#555;font-weight:700;-webkit-text-stroke:0.45px #555;left:1123.7px;top:78.1px;">0</div>
<div class="t" style="font-size:21.6px;line-height:21.6px;color:#5f5f5f;-webkit-text-stroke:0.35px #5f5f5f;letter-spacing:-0.39px;left:1141.1px;top:78.1px;">/ 0 per hour</div>
<div class="t" style="font-size:21.6px;line-height:21.6px;color:#555;font-weight:700;-webkit-text-stroke:0.45px #555;left:1313.7px;top:78.1px;">0</div>
<div class="t" style="font-size:21.6px;line-height:21.6px;color:#5f5f5f;-webkit-text-stroke:0.35px #5f5f5f;letter-spacing:-0.39px;left:1331.1px;top:78.1px;">/ 0 per hour</div>
<div class="t" style="font-size:21.6px;line-height:21.6px;color:#555;font-weight:700;-webkit-text-stroke:0.45px #555;left:1503.7px;top:78.1px;">0</div>
<div class="t" style="font-size:21.6px;line-height:21.6px;color:#5f5f5f;-webkit-text-stroke:0.35px #5f5f5f;letter-spacing:-0.39px;left:1521.1px;top:78.1px;">/ 0 per hour</div>
<div class="t" style="font-size:21.6px;line-height:21.6px;color:#555;font-weight:700;-webkit-text-stroke:0.45px #555;left:1693.7px;top:78.1px;">0</div>
<div class="t" style="font-size:21.6px;line-height:21.6px;color:#5f5f5f;-webkit-text-stroke:0.35px #5f5f5f;letter-spacing:-0.39px;left:1711.1px;top:78.1px;">/ 0 per hour</div>
<div class="t" style="font-size:21.6px;line-height:21.6px;color:#555;font-weight:700;-webkit-text-stroke:0.45px #555;left:1883.7px;top:78.1px;">0</div>
<div class="t" style="font-size:21.6px;line-height:21.6px;color:#5f5f5f;-webkit-text-stroke:0.35px #5f5f5f;letter-spacing:-0.39px;left:1901.1px;top:78.1px;">/ 0 per hour</div>
<div class="t" style="font-size:21.6px;line-height:21.6px;color:#555;font-weight:700;-webkit-text-stroke:0.45px #555;left:2073.7px;top:78.1px;">0</div>
<div class="t" style="font-size:21.6px;line-height:21.6px;color:#5f5f5f;-webkit-text-stroke:0.35px #5f5f5f;letter-spacing:-0.39px;left:2091.1px;top:78.1px;">/ 0 per hour</div>
<div class="b" style="left:0;top:118.1px;width:2282px;height:2px;background:#dedede"></div>
<div class="t" style="font-size:26.6px;line-height:26.6px;color:#5f5f5f;-webkit-text-stroke:0.35px #5f5f5f;letter-spacing:0.27px;left:31.5px;top:135.9px;">06/23/20...</div>
<div class="t" style="font-size:26.6px;line-height:26.6px;color:#5f5f5f;-webkit-text-stroke:0.35px #5f5f5f;letter-spacing:-0.45px;left:188.5px;top:135.9px;transform:scaleX(0.9946);transform-origin:0 0;">3:46</div>
<div class="t" style="font-size:26.6px;line-height:26.6px;color:#5f5f5f;-webkit-text-stroke:0.35px #5f5f5f;left:373.5px;top:135.9px;">0</div>
<div class="t" style="font-size:26.6px;line-height:26.6px;color:#5f5f5f;-webkit-text-stroke:0.35px #5f5f5f;left:748.3px;top:135.9px;">0</div>
<div class="t" style="font-size:26.6px;line-height:26.6px;color:#5f5f5f;-webkit-text-stroke:0.35px #5f5f5f;left:935.6px;top:135.9px;">0</div>
<div class="t" style="font-size:21.6px;line-height:21.6px;color:#555;font-weight:700;-webkit-text-stroke:0.45px #555;left:559.6px;top:138.1px;">0</div>
<div class="t" style="font-size:21.6px;line-height:21.6px;color:#5f5f5f;-webkit-text-stroke:0.35px #5f5f5f;letter-spacing:-0.39px;left:577.0px;top:138.1px;">/ 0 per hour</div>
<div class="t" style="font-size:21.6px;line-height:21.6px;color:#555;font-weight:700;-webkit-text-stroke:0.45px #555;left:1123.7px;top:138.1px;">0</div>
<div class="t" style="font-size:21.6px;line-height:21.6px;color:#5f5f5f;-webkit-text-stroke:0.35px #5f5f5f;letter-spacing:-0.39px;left:1141.1px;top:138.1px;">/ 0 per hour</div>
<div class="t" style="font-size:21.6px;line-height:21.6px;color:#555;font-weight:700;-webkit-text-stroke:0.45px #555;left:1313.7px;top:138.1px;">0</div>
<div class="t" style="font-size:21.6px;line-height:21.6px;color:#5f5f5f;-webkit-text-stroke:0.35px #5f5f5f;letter-spacing:-0.39px;left:1331.1px;top:138.1px;">/ 0 per hour</div>
<div class="t" style="font-size:21.6px;line-height:21.6px;color:#555;font-weight:700;-webkit-text-stroke:0.45px #555;left:1503.7px;top:138.1px;">0</div>
<div class="t" style="font-size:21.6px;line-height:21.6px;color:#5f5f5f;-webkit-text-stroke:0.35px #5f5f5f;letter-spacing:-0.39px;left:1521.1px;top:138.1px;">/ 0 per hour</div>
<div class="t" style="font-size:21.6px;line-height:21.6px;color:#555;font-weight:700;-webkit-text-stroke:0.45px #555;left:1693.7px;top:138.1px;">0</div>
<div class="t" style="font-size:21.6px;line-height:21.6px;color:#5f5f5f;-webkit-text-stroke:0.35px #5f5f5f;letter-spacing:-0.39px;left:1711.1px;top:138.1px;">/ 0 per hour</div>
<div class="t" style="font-size:21.6px;line-height:21.6px;color:#555;font-weight:700;-webkit-text-stroke:0.45px #555;left:1883.7px;top:138.1px;">0</div>
<div class="t" style="font-size:21.6px;line-height:21.6px;color:#5f5f5f;-webkit-text-stroke:0.35px #5f5f5f;letter-spacing:-0.39px;left:1901.1px;top:138.1px;">/ 0 per hour</div>
<div class="t" style="font-size:21.6px;line-height:21.6px;color:#555;font-weight:700;-webkit-text-stroke:0.45px #555;left:2073.7px;top:138.1px;">0</div>
<div class="t" style="font-size:21.6px;line-height:21.6px;color:#5f5f5f;-webkit-text-stroke:0.35px #5f5f5f;letter-spacing:-0.39px;left:2091.1px;top:138.1px;">/ 0 per hour</div>
<div class="b" style="left:0;top:178.1px;width:2282px;height:2px;background:#dedede"></div>
</div>
<div class="b" style="left:3120px;top:1608px;width:16px;height:141px;background:#bdbdbd"></div>
<div class="b" style="left:3180px;top:332px;width:16px;height:708px;background:#c1c1c1"></div>
<div class="b" style="left:3180px;top:1040px;width:16px;height:708px;background:#f4f4f4;box-shadow:inset 1px 0 0 #e2e2e2, inset -1px 0 0 #e2e2e2"></div>
<div class="b" style="left:336px;top:216px;width:2862px;height:116px;background:#fff;box-shadow:0 8px 22px rgba(0,0,0,.30)"></div>
<div class="t" style="font-size:30px;line-height:30px;color:#5a5a5a;font-weight:700;-webkit-text-stroke:0.45px #5a5a5a;letter-spacing:-0.3px;left:375.1px;top:258.8px;transform:scaleX(0.9622);transform-origin:0 0;">Edit agent - Sona Pisova</div>
<svg class="b" style="left:3137.0px;top:254.0px;" width="38" height="38" viewBox="0 0 24 24"><path fill="#5a5a5a" d="M19 6.41L17.59 5 12 10.59 6.41 5 5 6.41 10.59 12 5 17.59 6.41 19 12 13.41 17.59 19 19 17.59 13.41 12z"/></svg>
<div class="b" style="left:3314px;top:1264px;width:60px;height:238px;border-radius:9px 0 0 9px;background:#76b82e;box-shadow:0 0 6px rgba(0,0,0,.2)"></div>
<div class="t" style="left:3226.5px;top:1370px;width:220px;height:32px;line-height:32px;font-size:26.5px;color:#fff;-webkit-text-stroke:0.3px #fff;text-align:center;transform:rotate(-90deg);letter-spacing:-0.2px">Get Live Help</div>
<svg class="b" style="left:0;top:1818px" width="20" height="20" viewBox="0 0 20 20"><path d="M0 0 A20 20 0 0 0 20 20 H0 Z" fill="#0a0f18"/></svg>
<svg class="b" style="left:3338px;top:1818px" width="20" height="20" viewBox="0 0 20 20"><path d="M20 0 A20 20 0 0 1 0 20 H20 Z" fill="#0a1a20"/></svg>
</div>
<script>(function(){var w=window.innerWidth||3358;if(Math.abs(w-3358)>2){var a=document.getElementById("app");a.style.transformOrigin="0 0";a.style.transform="scale("+(w/3358)+")";}})();</script>
</body></html>
